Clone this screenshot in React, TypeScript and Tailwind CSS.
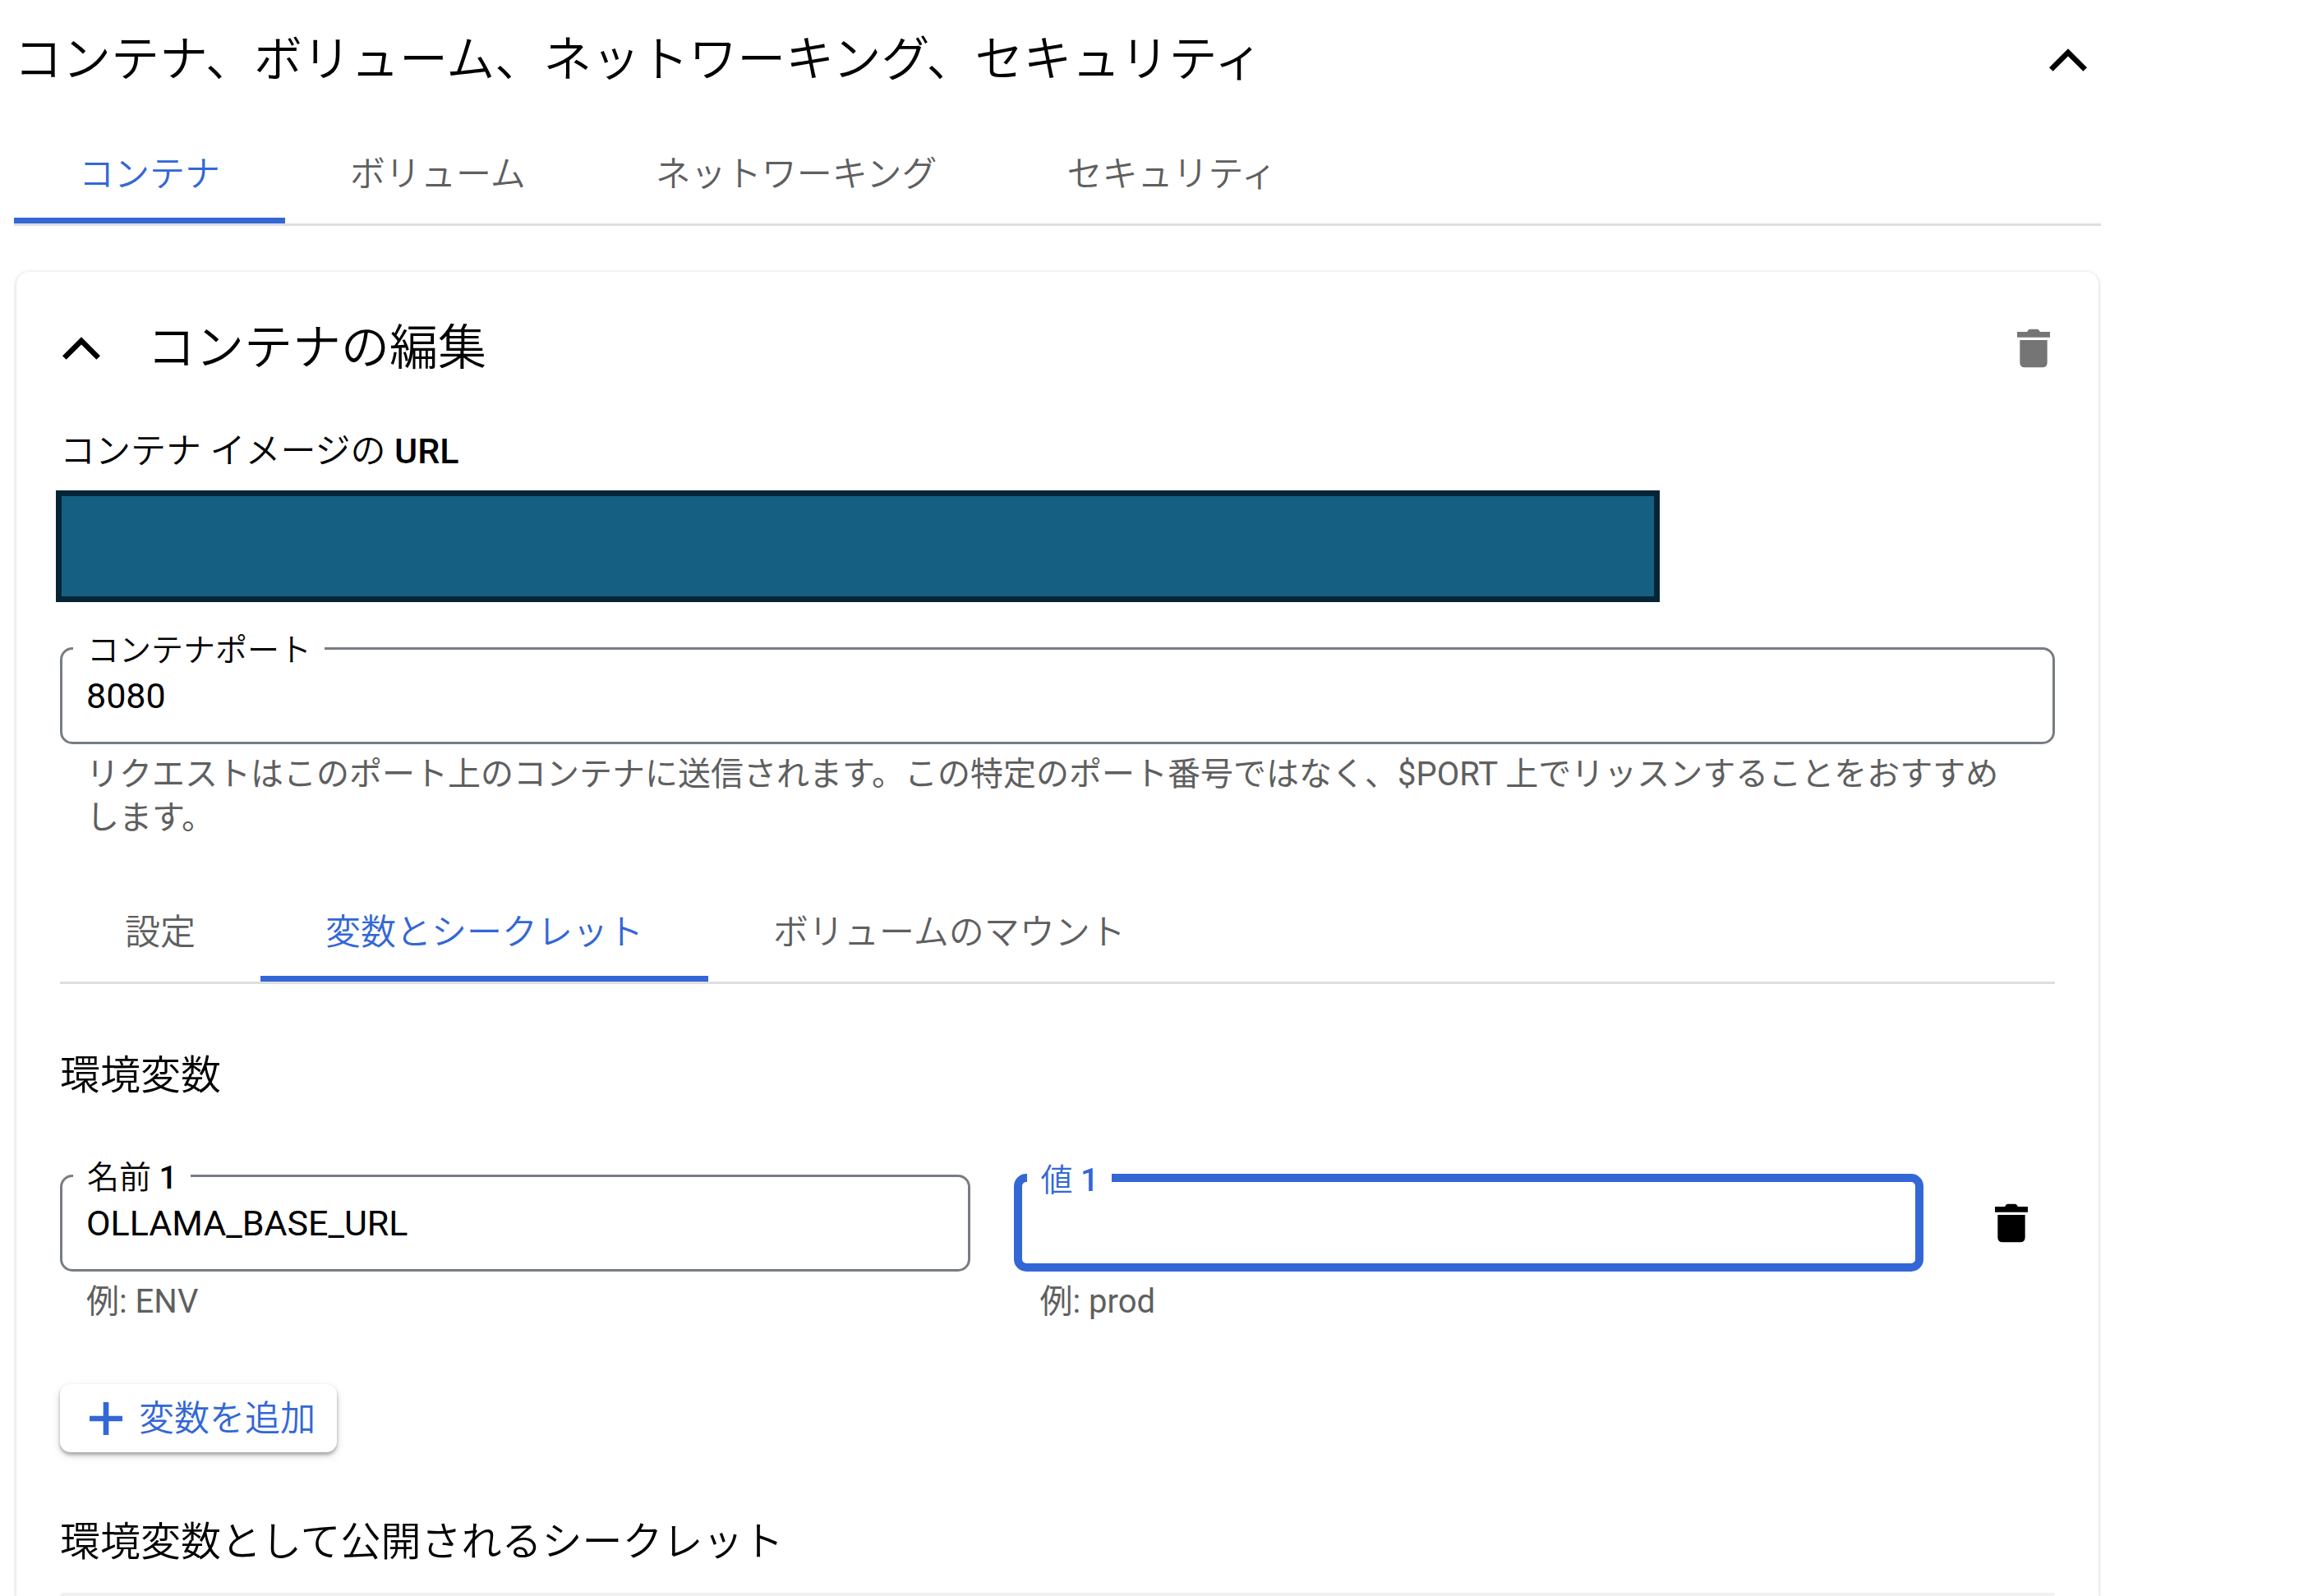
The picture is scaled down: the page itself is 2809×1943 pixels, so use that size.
import { useState } from "react";
import type { ReactNode } from "react";

const ExpandLessIcon = () => (
  <svg width={46} height={28} viewBox="2 4.8 14 8.41" fill="currentColor" aria-hidden="true">
    <path d="M9 4.8 2 11.8l1.41 1.41L9 7.63l5.59 5.58L16 11.8z" />
  </svg>
);

const TrashIcon = () => (
  <svg width={60} height={60} viewBox="0 0 18 18" fill="currentColor" aria-hidden="true">
    <path d="M6.6 3 7.2 2.2Q7.4 2 7.8 2h2.4q.4 0 .6.2l.6.8H15v2H3V3z" />
    <path d="M4 6h10v8.2q0 1.8-1.8 1.8H5.8Q4 16 4 14.2z" />
  </svg>
);

const AddIcon = () => (
  <svg width={60} height={60} viewBox="0 0 18 18" fill="currentColor" aria-hidden="true">
    <path d="M15 10h-5v5H8v-5H3V8h5V3h2v5h5z" />
  </svg>
);

type TabsProps = {
  label: string;
  items: string[];
  selected: string;
  onSelect: (item: string) => void;
};

function Tabs({ label, items, selected, onSelect }: TabsProps) {
  return (
    <div role="tablist" aria-label={label} className="flex border-b-[3px] border-[#dedede]">
      {items.map((item) => (
        <button
          key={item}
          type="button"
          role="tab"
          aria-selected={item === selected}
          onClick={() => onSelect(item)}
          className={
            item === selected
              ? "h-[120px] px-[79px] text-[43px] leading-[60px] font-[350] cursor-pointer border-y-[7px] border-t-transparent border-b-[#3367d6] text-[#3367d6]"
              : "h-[120px] px-[79px] text-[43px] leading-[60px] font-[350] cursor-pointer border-y-[7px] border-transparent text-[#5f5f5f]"
          }
        >
          {item}
        </button>
      ))}
    </div>
  );
}

type FieldProps = {
  id: string;
  label: ReactNode;
  hint: string;
  value: string;
  onChange: (value: string) => void;
  active?: boolean;
};

// 枠線の上にラベルが乗る入力欄
function Field({ id, label, hint, value, onChange, active }: FieldProps) {
  return (
    <div className="flex-1 min-w-0">
      <fieldset
        className={
          active
            ? "rounded-[15px] border-[10px] border-[#3367d6] pl-[6px] pr-[23px]"
            : "rounded-[15px] border-[3px] border-[#777d82] pl-[13px] pr-[30px]"
        }
      >
        <legend
          className={
            active
              ? "pt-[6px] pl-[17px] pr-4 text-[39px] leading-[40px] font-[350] text-[#3367d6]"
              : "pt-[6px] pl-[17px] pr-4 text-[39px] leading-[40px] font-[350] text-black"
          }
        >
          <label htmlFor={id}>{label}</label>
        </legend>
        <input
          id={id}
          type="text"
          value={value}
          aria-describedby={`${id}-hint`}
          onChange={(e) => onChange(e.target.value)}
          className={
            active
              ? "block w-full h-[60px] mb-[21px] pl-4 text-[43px] outline-none"
              : "block w-full h-[70px] mb-[21px] pl-4 text-[43px] outline-none"
          }
        />
      </fieldset>
      <p id={`${id}-hint`} className="mt-[10px] pl-8 pr-[60px] text-[40px] leading-[53px] text-[#5f5f5f]">
        {hint}
      </p>
    </div>
  );
}

export default function App() {
  const [pageTab, setPageTab] = useState("コンテナ");
  const [containerTab, setContainerTab] = useState("変数とシークレット");
  const [port, setPort] = useState("8080");
  const [envName, setEnvName] = useState("OLLAMA_BASE_URL");
  const [envValue, setEnvValue] = useState("");

  return (
    <main
      lang="ja"
      className="min-h-screen flex flex-col bg-white text-black pt-[33px] pl-[17px] pr-[252px] font-[Roboto,'Noto_Sans_CJK_JP',sans-serif]"
    >
      <header className="h-[80px] flex items-center justify-between pr-[17px]">
        <h1 className="text-[59px] leading-[80px] font-[350]">コンテナ、ボリューム、ネットワーキング、セキュリティ</h1>
        <button type="button" aria-label="閉じる" className="cursor-pointer">
          <ExpandLessIcon />
        </button>
      </header>

      <div className="mt-[39px]">
        <Tabs
          label="設定の種類"
          items={["コンテナ", "ボリューム", "ネットワーキング", "セキュリティ"]}
          selected={pageTab}
          onSelect={setPageTab}
        />
      </div>

      <section className="mt-[56px] mx-[3px] flex-1 rounded-t-[15px] pt-[53px] px-[53px] shadow-[0_1px_4px_1px_rgba(0,0,0,0.14)]">
        <div className="h-[80px] flex items-center pl-[3px] -mr-1">
          <button type="button" aria-label="コンテナを折りたたむ" className="cursor-pointer">
            <ExpandLessIcon />
          </button>
          <h2 className="ml-[57px] flex-1 text-[59px] leading-[80px] font-[350]">コンテナの編集</h2>
          <button type="button" aria-label="コンテナを削除" className="cursor-pointer text-[#757575]">
            <TrashIcon />
          </button>
        </div>

        <h3 className="mt-[55px] text-[43px] leading-[60px] font-[350]">
          コンテナ イメージの <span className="font-medium">URL</span>
        </h3>
        <div className="mt-[18px] -ml-[5px] h-[136px] w-[1952px] max-w-full border-[7px] border-[#032536] bg-[#156082]" />

        <div className="mt-[33px]">
          <Field
            id="port"
            label="コンテナポート"
            hint="リクエストはこのポート上のコンテナに送信されます。この特定のポート番号ではなく、$PORT 上でリッスンすることをおすすめします。"
            value={port}
            onChange={setPort}
          />
        </div>

        <div className="mt-[53px]">
          <Tabs
            label="コンテナの設定"
            items={["設定", "変数とシークレット", "ボリュームのマウント"]}
            selected={containerTab}
            onSelect={setContainerTab}
          />
        </div>

        <h3 className="mt-[79px] text-[49px] leading-[66px] font-[350]">環境変数</h3>
        <div className="mt-[65px] flex items-end gap-[53px]">
          <Field
            id="env-name"
            label={<>名前 <span className="font-medium">1</span></>}
            hint="例: ENV"
            value={envName}
            onChange={setEnvName}
          />
          <Field
            id="env-value"
            label={<>値 <span className="font-medium">1</span></>}
            hint="例: prod"
            value={envValue}
            onChange={setEnvValue}
            active
          />
          <button
            type="button"
            aria-label="変数を削除"
            className="w-[107px] h-[119px] mb-[63px] flex items-center justify-center cursor-pointer"
          >
            <TrashIcon />
          </button>
        </div>

        <button
          type="button"
          className="mt-[74px] h-[83px] flex items-center gap-[10px] px-[26px] rounded-[13px] text-[43px] leading-[60px] font-[350] text-[#3367d6] cursor-pointer shadow-[0_3px_4px_rgba(0,0,0,0.3),0_4px_12px_rgba(0,0,0,0.12)]"
        >
          <AddIcon />
          変数を追加
        </button>

        <h3 className="mt-[77px] text-[49px] leading-[66px] font-[350]">環境変数として公開されるシークレット</h3>
        <div className="mt-[28px] h-1 rounded-t-[13px] bg-[#f1f1f1]" />
      </section>
    </main>
  );
}
